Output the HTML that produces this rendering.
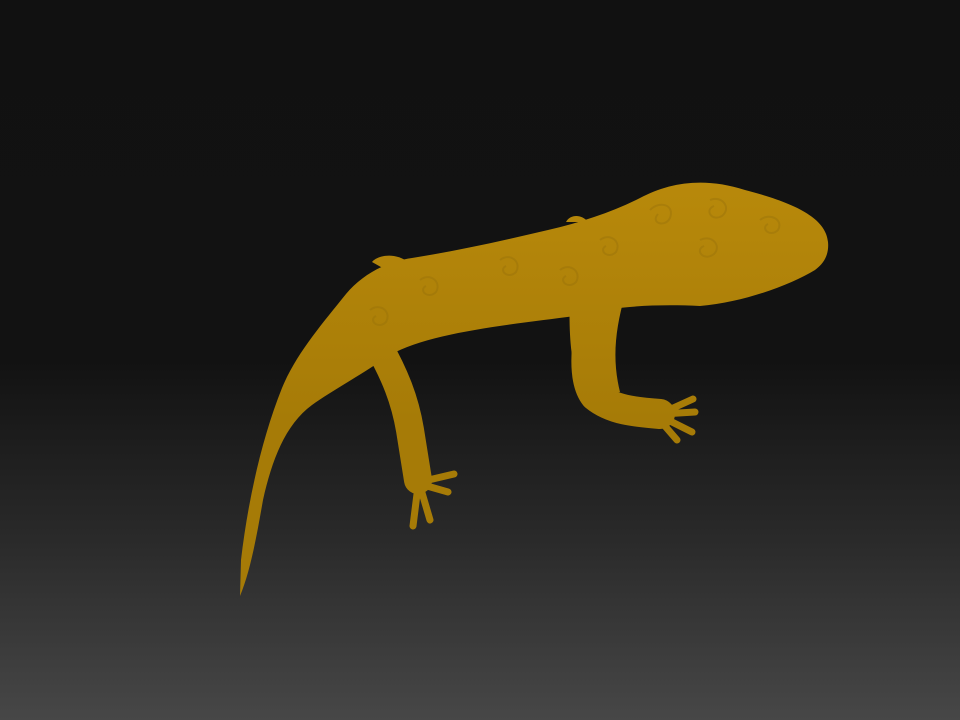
<!DOCTYPE html>
<html><head><style>
html,body{margin:0;padding:0;width:960px;height:720px;overflow:hidden}
body{background:linear-gradient(to bottom,#111 0%,#121212 50%,#2a2a2a 75%,#474747 100%)}
</style></head><body>
<svg width="960" height="720" viewBox="0 0 960 720" style="position:absolute;left:0;top:0">
<defs>
<linearGradient id="g" gradientUnits="userSpaceOnUse" x1="0" y1="180" x2="0" y2="420">
<stop offset="0" stop-color="#b8890b"/><stop offset="1" stop-color="#a67b07"/>
</linearGradient>
</defs>
<g fill="url(#g)" stroke="none">
<path d="M828,242 C826,218 795,203 745,190 C705,177 670,182 640,198 C612,212 582,222 548,230 C505,240 462,250 412,258 C385,262 362,275 346,294 C322,324 296,354 282,388 C262,438 248,500 241,560 L240,596 C250,572 256,540 263,500 C272,460 285,425 312,405 C330,392 356,378 390,355 C430,332 515,324 575,316 C615,306 655,304 700,306 C745,302 790,285 815,270 C826,262 829,252 828,242 Z"/>
<path d="M372,262 C378,255 395,252 408,262 L395,275 Z"/>
<path d="M566,222 C570,214 582,214 588,222 Z"/>
<path d="M570,295 C568,340 572,385 590,398 L620,392 C612,360 615,330 625,295 Z"/>
</g>
<g fill="none" stroke="url(#g)" stroke-linecap="round" stroke-linejoin="round">
<path d="M378,345 C395,375 405,400 410,430 L418,480" stroke-width="28"/>
<path d="M420,482 L454,474 M420,484 L448,492 M420,486 L430,520 M418,486 L413,526" stroke-width="7"/>
<path d="M592,310 C586,345 582,380 595,396 C612,410 635,412 660,414" stroke-width="30"/>
<path d="M660,414 L693,399 M662,414 L695,412 M660,416 L692,432 M658,418 L677,440" stroke-width="7"/>
</g>
<g fill="none" stroke="#96700a" stroke-width="2" opacity="0.4">
<path d="M650,210 c10,-10 25,-5 20,8 c-5,10 -20,5 -12,-4"/>
<path d="M710,200 c12,-5 22,8 12,16 c-10,6 -18,-6 -8,-10"/>
<path d="M760,220 c10,-8 24,0 18,10 c-8,8 -18,-2 -10,-6"/>
<path d="M700,240 c12,-6 22,6 14,14 c-10,8 -20,-4 -10,-8"/>
<path d="M600,240 c10,-8 22,2 16,12 c-8,8 -18,-2 -10,-6"/>
<path d="M500,260 c10,-8 22,2 16,12 c-8,8 -18,-2 -10,-6"/>
<path d="M420,280 c10,-8 22,2 16,12 c-8,8 -18,-2 -10,-6"/>
<path d="M370,310 c10,-8 22,2 16,12 c-8,8 -18,-2 -10,-6"/>
<path d="M560,270 c10,-8 22,2 16,12 c-8,8 -18,-2 -10,-6"/>
</g>
</svg>
</body></html>
